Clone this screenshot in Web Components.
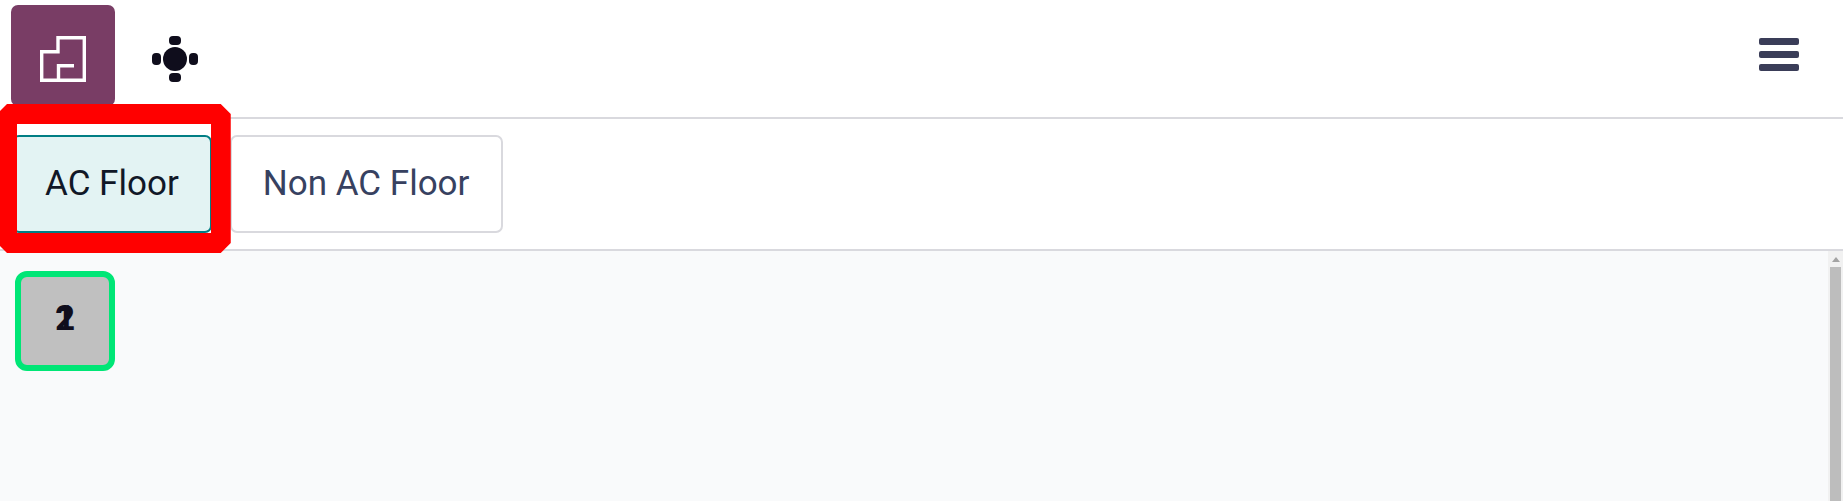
<!DOCTYPE html>
<html>
<head>
<meta charset="utf-8">
<title>Floors</title>
<style>
    html, body { margin: 0; height: 100%; overflow: hidden; background: #fff; }
    body { font-family: Roboto, "Liberation Sans", sans-serif; }
</style>
</head>
<body>
<floor-app></floor-app>
<script>
'use strict'

const icons = {
    floor: `<svg viewBox="0 0 104 100" width="104" height="100" fill="none" stroke="#fff" stroke-width="3.4">
        <path d="M30.7 46.7H47V32.7H73.3V75.3H30.7Z"/>
        <path d="M47.5 75.3V60.7H63"/>
    </svg>`,
    table: `<svg viewBox="0 0 104 100" width="104" height="100" fill="#0f0d1c">
        <circle cx="60" cy="54" r="12"/>
        <rect x="54" y="31" width="12" height="9" rx="4"/>
        <rect x="54" y="68" width="12" height="9" rx="4"/>
        <rect x="37" y="48" width="9" height="12" rx="4"/>
        <rect x="74" y="48" width="9" height="12" rx="4"/>
    </svg>`
}

class NavTab extends HTMLElement {
    constructor() {
        super()
        this.attachShadow({mode: 'open'}).innerHTML = `
            <style>
                :host { display: flex; width: 104px; height: 101px; border-radius: 7px; }
                :host([active]) { background: #793d65; }
            </style>
            <slot></slot>`
    }
}

class MenuButton extends HTMLElement {
    constructor() {
        super()
        this.attachShadow({mode: 'open'}).innerHTML = `
            <style>
                :host { display: flex; flex-direction: column; gap: 6px; width: 40px; }
                span { display: block; height: 7px; border-radius: 2px; background: #3a3d58; }
            </style>
            <span></span><span></span><span></span>`
    }
}

class FloorButton extends HTMLElement {
    constructor() {
        super()
        this.attachShadow({mode: 'open'}).innerHTML = `
            <style>
                :host {
                    display: flex; align-items: center; position: relative;
                    box-sizing: border-box; height: 98px; padding: 0 32px 2px 31px;
                    border: 2px solid #d9d9de; border-radius: 7px;
                    background: #fff; color: #374160;
                    font-size: 35px;
                }
                :host([active]) { padding-right: 31px; border-color: #017e84; background: #e3f3f3; color: #111827; }
                .ring { display: none; }
                :host([focused]) .ring {
                    display: block; position: absolute; inset: -33px -21px -22px -17px; z-index: 5;
                    border: 20px solid #f00;
                    clip-path: polygon(10px 0, calc(100% - 10px) 0, 100% 10px, 100% calc(100% - 10px),
                        calc(100% - 10px) 100%, 10px 100%, 0 calc(100% - 10px), 0 10px);
                }
            </style>
            <slot></slot>
            <div class="ring"></div>`
    }
}

class TableTile extends HTMLElement {
    constructor() {
        super()
        this.attachShadow({mode: 'open'}).innerHTML = `
            <style>
                :host {
                    display: grid; place-items: center; box-sizing: border-box;
                    width: 100px; height: 100px; padding-bottom: 6px;
                    border: 6px solid #00e676; border-radius: 12px;
                    background: #c0c0c0; color: #0f0d1c;
                    font-size: 35px; font-weight: 700;
                }
                span { grid-area: 1 / 1; }
            </style>
            <span>${this.getAttribute('seats')}</span>
            <span>${this.getAttribute('label')}</span>`
    }
}

class ScrollTrack extends HTMLElement {
    constructor() {
        super()
        this.attachShadow({mode: 'open'}).innerHTML = `
            <style>
                :host { display: flex; flex-direction: column; box-sizing: border-box; width: 15px; padding: 0 2px; background: #f1f1f1; }
                .up { display: flex; justify-content: center; align-items: center; height: 16px; flex: none; }
                .up svg { display: block; }
                .thumb { flex: 1; background: #bdbdbd; }
            </style>
            <div class="up"><svg width="8" height="5" viewBox="0 0 8 5"><path d="M4 0 8 5H0Z" fill="#a3a3a3"/></svg></div>
            <div class="thumb"></div>`
    }
}

class FloorApp extends HTMLElement {
    constructor() {
        super()
        this.attachShadow({mode: 'open'}).innerHTML = `
            <style>
                :host { display: flex; flex-direction: column; height: 501px; color: #111827; }
                .top {
                    display: flex; align-items: flex-start; box-sizing: border-box; height: 119px;
                    padding: 5px 44px 0 11px; border-bottom: 2px solid #d9d9de;
                }
                menu-button { margin: 33px 0 0 auto; }
                .floors {
                    display: flex; gap: 18px; box-sizing: border-box; height: 132px;
                    padding: 16px 12px; border-bottom: 2px solid #d9d9de;
                }
                .body { display: flex; flex: 1; min-height: 0; background: #f9fafb; }
                .tables { flex: 1; padding: 20px 15px; }
            </style>
            <div class="top">
                <nav-tab active>${icons.floor}</nav-tab>
                <nav-tab>${icons.table}</nav-tab>
                <menu-button></menu-button>
            </div>
            <div class="floors">
                <floor-button active focused>AC Floor</floor-button>
                <floor-button>Non AC Floor</floor-button>
            </div>
            <div class="body">
                <div class="tables">
                    <table-tile label="2" seats="1"></table-tile>
                </div>
                <scroll-track></scroll-track>
            </div>`
    }
}

customElements.define('nav-tab', NavTab)
customElements.define('menu-button', MenuButton)
customElements.define('floor-button', FloorButton)
customElements.define('table-tile', TableTile)
customElements.define('scroll-track', ScrollTrack)
customElements.define('floor-app', FloorApp)
</script>
</body>
</html>
